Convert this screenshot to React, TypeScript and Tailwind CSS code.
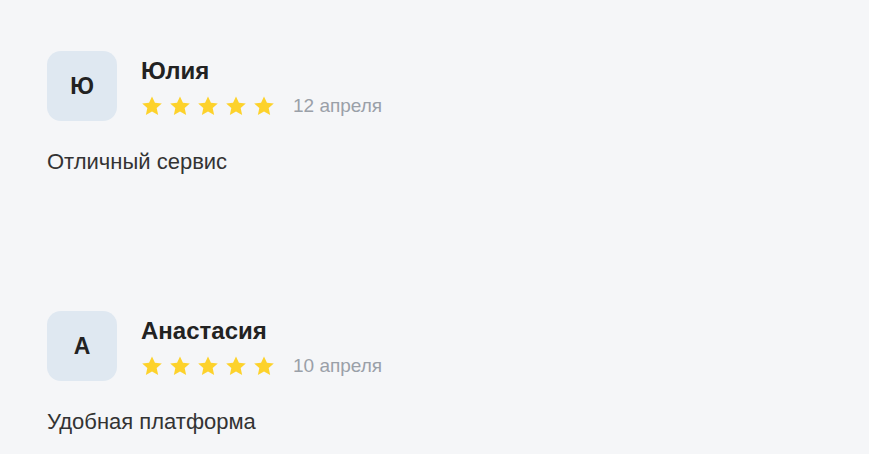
import React from "react";

type Review = {
  name: string;
  date: string;
  text: string;
};

const reviews: Review[] = [
  { name: "Юлия", date: "12 апреля", text: "Отличный сервис" },
  { name: "Анастасия", date: "10 апреля", text: "Удобная платформа" },
];

const Star = () => (
  <svg width="22" height="22" viewBox="0 0 24 24" className="shrink-0">
    <path
      d="M12 1.5l3.2 6.9 7.5.8-5.6 5.1 1.6 7.4L12 17.9l-6.7 3.8 1.6-7.4-5.6-5.1 7.5-.8z"
      fill="#fdd22b"
    />
  </svg>
);

const ReviewCard: React.FC<{ review: Review }> = ({ review }) => (
  <div className="flex flex-col">
    <div className="flex items-start gap-6">
      <div className="w-[70px] h-[70px] rounded-[14px] bg-[#dfe8f1] flex items-center justify-center text-[23px] font-bold text-[#222]">
        {review.name[0]}
      </div>
      <div className="flex flex-col pt-[6px]">
        <div className="text-[24px] leading-[28px] font-bold text-[#222]">{review.name}</div>
        <div className="flex items-center mt-[10px] h-[22px]">
          <div className="flex gap-[6px]">
            {[0, 1, 2, 3, 4].map((i) => (
              <Star key={i} />
            ))}
          </div>
          <span className="ml-[18px] text-[19px] leading-[22px] text-[#9aa0a8]">{review.date}</span>
        </div>
      </div>
    </div>
    <p className="mt-[28px] text-[22px] leading-[26px] text-[#333]">{review.text}</p>
  </div>
);

const App: React.FC = () => {
  return (
    <div
      className="min-h-screen bg-[#f5f6f8] px-[47px] pt-[51px] flex flex-col gap-[136px]"
      style={{ fontFamily: '"Liberation Sans", Arial, sans-serif' }}
    >
      {reviews.map((r) => (
        <ReviewCard key={r.name} review={r} />
      ))}
    </div>
  );
};

export default App;
